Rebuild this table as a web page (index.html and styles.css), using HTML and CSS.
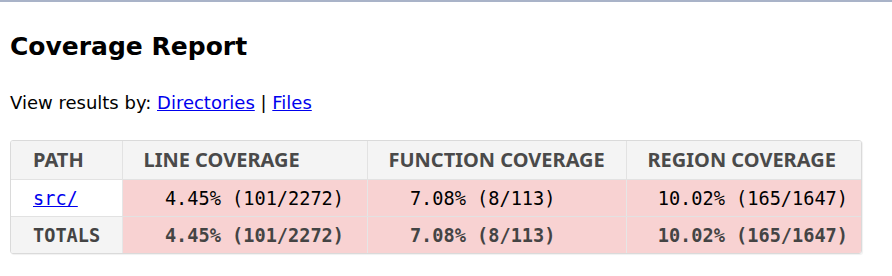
FILE: index.html
```html
<!DOCTYPE html>
<html>
<head>
<meta charset="utf-8">
<title>Coverage Report</title>
<link rel="stylesheet" href="styles.css">
</head>
<body>
<div class="topline"></div>
<main class="page">
  <h1 class="title">Coverage Report</h1>
  <p class="view">View results by: <a href="#">Directories</a> | <a href="#">Files</a></p>
  <div class="report-wrap">
  <table class="report">
    <colgroup>
      <col class="c-path">
      <col class="c-line">
      <col class="c-func">
      <col class="c-region">
    </colgroup>
    <thead>
      <tr>
        <th>Path</th>
        <th>Line Coverage</th>
        <th>Function Coverage</th>
        <th>Region Coverage</th>
      </tr>
    </thead>
    <tbody>
      <tr class="row">
        <td class="path"><a href="#" class="mono">src/</a></td>
        <td class="red"><span class="mono">  4.45% (101/2272)</span></td>
        <td class="red"><span class="mono">  7.08% (8/113)</span></td>
        <td class="red"><span class="mono"> 10.02% (165/1647)</span></td>
      </tr>
      <tr class="row totals">
        <td class="path">Totals</td>
        <td class="red"><span class="mono">  4.45% (101/2272)</span></td>
        <td class="red"><span class="mono">  7.08% (8/113)</span></td>
        <td class="red"><span class="mono"> 10.02% (165/1647)</span></td>
      </tr>
    </tbody>
  </table>
  </div>
</main>
</body>
</html>
```
FILE: styles.css
```css
html, body {
  margin: 0;
  padding: 0;
  background: #fff;
}
body {
  font-family: "DejaVu Sans", sans-serif;
  color: #000;
}
.topline {
  height: 2px;
  background: #a9b3c8;
}
.page {
  padding: 0 10px;
}
.title {
  margin: 31px 0 0;
  font-size: 25px;
  font-weight: bold;
  line-height: 28px;
}
.view {
  margin: 30px 0 0;
  font-size: 18px;
  line-height: 24px;
}
.view a {
  color: #0000ee;
}
.report-wrap {
  margin-top: 25px;
  display: inline-block;
  border: 1px solid #dadada;
  border-radius: 3px;
  box-shadow: 1px 1px 1px rgba(0,0,0,0.06);
  overflow: hidden;
}
.report {
  border-collapse: collapse;
  table-layout: fixed;
  width: 850px;
}
.c-path { width: 111px; }
.c-line { width: 245px; }
.c-func { width: 259px; }
.c-region { width: 235px; }
.report th {
  background: #f4f4f4;
  color: #4a4a4a;
  text-transform: uppercase;
  font-family: "Noto Sans", "Open Sans", sans-serif;
  font-size: 20px;
  font-weight: bold;
  text-align: left;
  padding: 0 0 0 21px;
  height: 38px;
  line-height: 26px;
  border-left: 1px solid #e2e2e2;
  border-bottom: 1px solid #e2e2e2;
  white-space: nowrap;
}
.report td {
  padding: 0 0 0 20px;
  height: 36px;
  border-left: 1px solid #e6e6e6;
  border-bottom: 1px solid #e2e2e2;
  text-align: left;
  white-space: nowrap;
}
.report th:first-child, .report td:first-child {
  border-left: none;
}
.report th:first-child {
  padding-left: 22px;
}
.report td:first-child {
  padding-left: 22px;
}
.report tr:last-child td {
  border-bottom: none;
}
.mono {
  font-family: "DejaVu Sans Mono", monospace;
  font-size: 18.6px;
  white-space: pre;
}
.path a {
  color: #0000ee;
}
.red {
  background: #f8d2d2;
}
.totals td {
  color: #444;
  font-weight: bold;
}
.totals .path {
  background: #f4f4f4;
  text-transform: uppercase;
  font-family: "DejaVu Sans Mono", monospace;
  font-size: 18.6px;
}
```
